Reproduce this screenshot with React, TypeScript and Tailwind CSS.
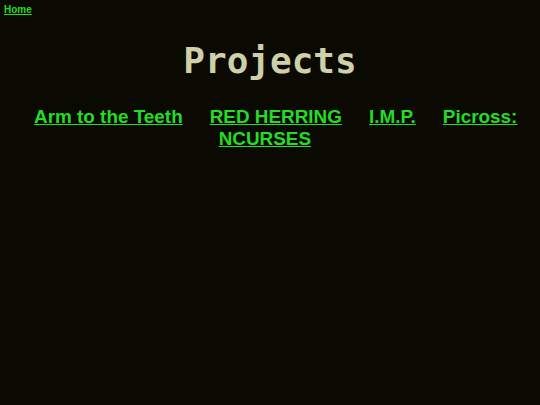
export default function App() {
  return (
    <div className="min-h-[405px] w-full bg-[#0a0a03] font-['Liberation_Sans',Arial,sans-serif]">
      <nav className="px-[4px] pt-[3px] text-[10px] leading-[14px]">
        <a href="#" className="font-bold text-[#22dd22] underline">
          Home
        </a>
      </nav>
      <h1 className="mt-[22px] text-center font-['DejaVu_Sans_Mono',monospace] text-[36px] font-bold leading-[44px] text-[#cfcfa8]">
        Projects
      </h1>
      <div className="mt-[23px] flex items-start gap-[27px] pl-[34px] text-[18.9px] font-bold leading-[22px] text-[#22dd22]">
        <a href="#" className="shrink-0 underline">
          Arm to the Teeth
        </a>
        <a href="#" className="flex shrink-0 flex-col underline">
          <span>RED HERRING</span>
          <span className="pl-[9px]">NCURSES</span>
        </a>
        <a href="#" className="shrink-0 underline">
          I.M.P.
        </a>
        <a href="#" className="shrink-0 underline">
          Picross:
        </a>
      </div>
    </div>
  );
}
